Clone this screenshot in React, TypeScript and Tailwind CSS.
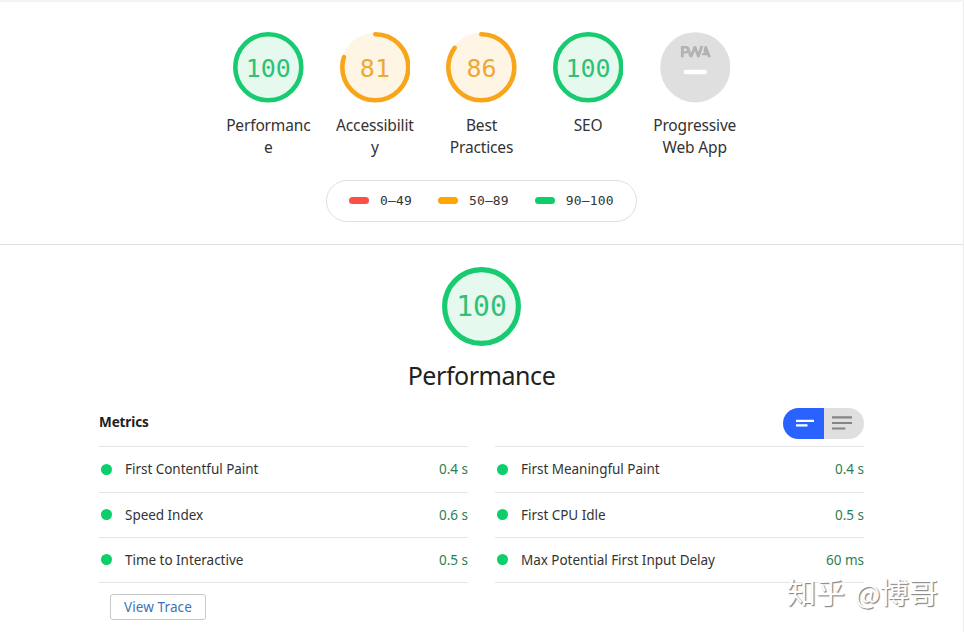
import { clsx } from 'clsx';

type Score = {
  score: number;
  label: string;
};

const scores: Score[] = [
  { score: 100, label: 'Performanc\ne' },
  { score: 81, label: 'Accessibilit\ny' },
  { score: 86, label: 'Best\nPractices' },
  { score: 100, label: 'SEO' },
];

const ranges = [
  { label: '0–49', color: 'bg-[#fa5045]', gap: 'mr-[26px]' },
  { label: '50–89', color: 'bg-[#ffa400]', gap: 'mr-[26px]' },
  { label: '90–100', color: 'bg-[#0cce6b]', gap: '' },
];

const metrics = [
  [
    { name: 'First Contentful Paint', value: '0.4 s' },
    { name: 'Speed Index', value: '0.6 s' },
    { name: 'Time to Interactive', value: '0.5 s' },
  ],
  [
    { name: 'First Meaningful Paint', value: '0.4 s' },
    { name: 'First CPU Idle', value: '0.5 s' },
    { name: 'Max Potential First Input Delay', value: '60 ms' },
  ],
];

function Gauge({ score, large }: { score: number; large?: boolean }) {
  const pass = score >= 90;
  const size = large ? 79 : 70.6;
  const stroke = large ? 5.2 : 4.6;
  const r = (size - stroke) / 2;
  const length = 2 * Math.PI * r;
  const arc = score === 100 ? length : (score / 100) * length - stroke / 2;

  return (
    <div className={clsx('grid shrink-0 place-items-center', pass ? 'text-[#18cb70]' : 'text-[#f9a51a]')}>
      <svg width={size} height={size} className="col-start-1 row-start-1">
        <circle cx={size / 2} cy={size / 2} r={size / 2 - 0.5} fill={pass ? '#e6f9ef' : '#fff5e5'} />
        <circle
          cx={size / 2}
          cy={size / 2}
          r={r}
          fill="none"
          stroke="currentColor"
          strokeWidth={stroke}
          strokeLinecap="round"
          strokeDasharray={`${arc} ${length}`}
          transform={`rotate(-90 ${size / 2} ${size / 2})`}
        />
      </svg>
      <span
        className={clsx(
          "col-start-1 row-start-1 font-['DejaVu_Sans_Mono',monospace] leading-none",
          large ? 'text-[28px]' : 'pt-0.5 text-[25px]',
          pass ? 'text-[#2fc276]' : 'text-[#eca936]',
        )}
      >
        {score}
      </span>
    </div>
  );
}

function PwaBadge() {
  return (
    <svg width="70.6" height="70.6" viewBox="0 0 71 71" className="ml-px">
      <circle cx="35.5" cy="35.5" r="35.3" fill="#dfdfdf" />
      <g fill="#b2b2b2">
        <path
          fillRule="evenodd"
          d="M21 14h5c2.600 0 4 1.500 4 3.800 0 2.300-1.500 3.900-4.100 3.900h-2v3.600H21zM23.900 16.500v2.800h1.700c1 0 1.500-.5 1.500-1.400 0-.9-.5-1.400-1.500-1.400z"
        />
        <path d="M28.300 22.200l2-3.800 1.200 2.500 2.600-6.900h2.100l2.300 6.400 2.100-6.400h2.900l-3.700 11.300h-2.300l-2.500-6.300-2.500 6.300h-2.300z" />
        <path d="M42 23.300l.9-2.500h1.900l-1-2.400 1.300-4.400h1.900l4.200 11.300h-3l-.8-2z" />
      </g>
      <rect x="23.800" y="37.900" width="23.400" height="4.700" rx="2.300" fill="#fff" />
    </svg>
  );
}

function GaugeLabel({ children }: { children: string }) {
  return (
    <div className="mt-[11.4px] text-center text-[15.5px] leading-[22px] tracking-[-0.15px] whitespace-pre text-[#333]">
      {children}
    </div>
  );
}

function ViewToggle() {
  return (
    <svg width="81" height="31" viewBox="0 0 81 31">
      <path d="M41 0H15.500a15.500 15.500 0 0 0 0 31H41z" fill="#2962ff" />
      <path d="M41 0h24.500a15.500 15.500 0 0 1 0 31H41z" fill="#dfdfdf" />
      <path d="M13 12.900h18M13 17.300h11.500" stroke="#fff" strokeWidth="2.200" />
      <path d="M49 9.400h20M49 15h20M49 20.500h13.300" stroke="#858585" strokeWidth="2.200" />
    </svg>
  );
}

export default function App() {
  return (
    <div className="relative h-[632px] w-[964px] overflow-hidden border-t-2 border-r border-t-[#f4f4f4] border-r-[#ebebeb] bg-white font-['Noto_Sans',sans-serif] text-[#212121]">
      <header className="flex h-[243px] flex-col items-center border-b border-[#e0e0e0] pt-[30px]">
        <div className="flex h-[148px]">
          {scores.map((item) => (
            <div key={item.label} className="flex w-[106.6px] flex-col items-center">
              <Gauge score={item.score} />
              <GaugeLabel>{item.label}</GaugeLabel>
            </div>
          ))}
          <div className="flex w-[106.6px] flex-col items-center">
            <PwaBadge />
            <GaugeLabel>{'Progressive\nWeb App'}</GaugeLabel>
          </div>
        </div>
        <div className="flex h-[42px] w-[311px] items-center rounded-full border border-[#e0e0e0] pb-px pl-[22px]">
          {ranges.map((range) => (
            <div key={range.label} className={clsx('flex items-center', range.gap)}>
              <div className={clsx('mr-[11px] h-[7px] w-5 rounded-full', range.color)} />
              <span className="font-['DejaVu_Sans_Mono',monospace] text-[13px] leading-none tracking-[0.15px] text-[#333]">
                {range.label}
              </span>
            </div>
          ))}
        </div>
      </header>

      <div className="flex flex-col items-center pt-[22px]">
        <Gauge score={100} large />
        <h1 className="mt-[11px] text-[25px] leading-9 tracking-[-0.45px] text-[#212121]">Performance</h1>
      </div>

      <main className="mx-auto mt-[15px] w-[765px]">
        <div className="flex h-[38px] items-start justify-between">
          <h2 className="pt-1 text-[13.5px] leading-5 font-bold tracking-[-0.1px]">Metrics</h2>
          <ViewToggle />
        </div>
        <div className="flex justify-between">
          {metrics.map((column, i) => (
            <div key={i} className="w-[369px] border-t border-[#e6e6e6]">
              {column.map((metric, j) => (
                <div
                  key={metric.name}
                  className={clsx(
                    'flex items-center border-b border-[#e6e6e6] pl-0.5 text-[13.5px]',
                    j === 0 ? 'h-[46px]' : 'h-[45px]',
                  )}
                >
                  <div className={clsx('size-[11px] rounded-full bg-[#0cce6b]', j > 0 && 'mb-px')} />
                  <span className="ml-[13px] flex-1 tracking-[-0.03px] text-[#333]">{metric.name}</span>
                  <span className="text-[#2b7f50]">{metric.value}</span>
                </div>
              ))}
            </div>
          ))}
        </div>
        <button className="mt-[11px] ml-[11px] flex h-[26px] w-24 items-center justify-center rounded-[3px] border border-[#c8c8c8] text-[13.5px] tracking-[0.1px] text-[#3c73bc]">
          View Trace
        </button>
      </main>

      <div className="absolute top-[569px] left-[787px] font-['Noto_Sans_CJK_SC',sans-serif] text-[29px] leading-10 [word-spacing:4px] whitespace-nowrap text-white [text-shadow:1px_1px_1px_#888,1px_1px_1px_#aaa]">
        知乎 <span className="text-[26px]">@</span>博哥
      </div>
    </div>
  );
}
